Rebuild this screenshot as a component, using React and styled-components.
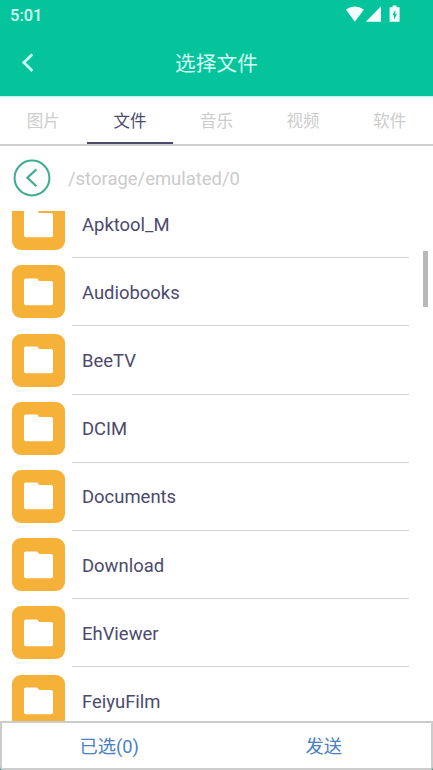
import React from "react";
import styled, { createGlobalStyle } from "styled-components";

const tabs = ["图片", "文件", "音乐", "视频", "软件"];

const folders = [
  "Apktool_M",
  "Audiobooks",
  "BeeTV",
  "DCIM",
  "Documents",
  "Download",
  "EhViewer",
  "FeiyuFilm"
];

const App = () => (
  <Screen>
    <GlobalStyle />
    <StatusBar>
      <Clock>5:01</Clock>
      <svg width="57" height="18" viewBox="0 0 57 18" fill="#f2fffc">
        <path d="M0.8 5.6Q9.8 -0.8 19 5.6L9.8 17.8Z" />
        <path d="M20.8 17.8L36 2.2V17.8Z" />
        <path d="M47.6 1.6h4v1.6h3V17.8h-10V3.2h3Z" />
        <path d="M50.4 6L47.4 11.2h1.6v4.2l2.9-5.2h-1.5Z" fill="#05c39a" />
      </svg>
    </StatusBar>
    <Header>
      <BackButton aria-label="back">
        <svg width="14" height="20" viewBox="0 0 14 20" fill="none">
          <path d="M11.4 1.2L2.8 9.6L11.4 18" stroke="#c9fff2" strokeWidth="2.8" />
        </svg>
      </BackButton>
      <Title>选择文件</Title>
    </Header>
    <TabBar>
      {tabs.map(tab => (
        <Tab key={tab} $active={tab === "文件"}>
          {tab}
        </Tab>
      ))}
    </TabBar>
    <PathBar>
      <svg width="38" height="38" viewBox="0 0 38 38" fill="none" stroke="#3dac8f">
        <circle cx="19" cy="19" r="17.4" strokeWidth="2" />
        <path d="M23.4 10.4L14.4 18.8L23.4 27.2" strokeWidth="2.2" />
      </svg>
      <Path>/storage/emulated/0</Path>
    </PathBar>
    <ListArea>
      <FolderList>
        {folders.map(name => (
          <FolderRow key={name}>
            <FolderIcon>
              <svg width="29" height="28" viewBox="0 0 29 28" fill="#fff">
                <path d="M1.8 0.5H12.6Q13.6 0.5 14.1 1.4L15 3H27.2Q29 3 29 4.8V25.4Q29 27.2 27.2 27.2H1.8Q0 27.2 0 25.4V2.3Q0 0.5 1.8 0.5Z" />
              </svg>
            </FolderIcon>
            <FolderName>{name}</FolderName>
          </FolderRow>
        ))}
      </FolderList>
      <ScrollTrack>
        <ScrollThumb />
      </ScrollTrack>
    </ListArea>
    <Footer>
      <FooterBar>
        <FooterButton>已选(0)</FooterButton>
        <FooterButton>发送</FooterButton>
      </FooterBar>
    </Footer>
  </Screen>
);

const GlobalStyle = createGlobalStyle`
  * {
    box-sizing: border-box;
  }
  body {
    margin: 0;
    background: #fff;
    font-family: Roboto, "Noto Sans CJK SC", sans-serif;
  }
  svg {
    display: block;
    flex: none;
  }
`;

const Screen = styled.div`
  display: flex;
  flex-direction: column;
  width: 433px;
  height: 770px;
  overflow: hidden;
  background: #fff;
`;

const StatusBar = styled.div`
  display: flex;
  justify-content: space-between;
  height: 30px;
  flex: none;
  padding: 4px 31px 0 10px;
  background: #05c39a;
`;

const Clock = styled.span`
  color: #d3fff4;
  font-size: 16.5px;
  font-weight: 500;
  line-height: 23px;
`;

const Header = styled.header`
  display: grid;
  grid-template-columns: 56px 1fr 56px;
  align-items: center;
  height: 66px;
  flex: none;
  background: #05c39a;
`;

const BackButton = styled.button`
  display: flex;
  padding: 0 0 0 21px;
  border: 0;
  background: none;
`;

const Title = styled.h1`
  margin: 0;
  padding-top: 2px;
  color: #d3fff4;
  font-size: 20.7px;
  font-weight: 400;
  line-height: 32px;
  text-align: center;
`;

const TabBar = styled.nav`
  display: flex;
  height: 50px;
  flex: none;
  border-top: 1px solid #b5ffee;
  border-bottom: 2px solid #cfcfcf;
`;

const Tab = styled.button`
  flex: 1;
  padding: 1px 0 0;
  border: 0;
  border-bottom: 2px solid ${props => (props.$active ? "#4c4a6c" : "transparent")};
  background: none;
  color: ${props => (props.$active ? "#4c4a6c" : "#cccccc")};
  font-family: inherit;
  font-size: 16.5px;
`;

const PathBar = styled.div`
  display: flex;
  align-items: center;
  gap: 17px;
  height: 65px;
  flex: none;
  padding: 0 0 1px 13px;
`;

const Path = styled.span`
  padding-top: 2px;
  color: #cbcbcb;
  font-size: 18.45px;
`;

const ListArea = styled.div`
  display: flex;
  height: 510px;
  flex: none;
  overflow: hidden;
`;

const FolderList = styled.ul`
  flex: 1;
  margin: -20.9px 0 0;
  padding: 0 0 0 12px;
  list-style: none;
`;

const FolderRow = styled.li`
  display: flex;
  align-items: center;
  gap: 7px;
  height: 68.2px;
`;

const FolderIcon = styled.span`
  display: flex;
  align-items: center;
  justify-content: center;
  width: 53px;
  height: 53px;
  margin-bottom: 1px;
  border-radius: 9px;
  background: #f5b138;
`;

const FolderName = styled.span`
  display: flex;
  flex: 1;
  align-items: center;
  height: 100%;
  padding: 2px 0 0 10px;
  border-bottom: 1px solid #d2d2d2;
  color: #4c4a6c;
  font-size: 18.45px;
`;

const ScrollTrack = styled.div`
  width: 24px;
  padding: 40px 5px 0 14px;
`;

const ScrollThumb = styled.div`
  height: 56px;
  background: #b8b8b8;
`;

const Footer = styled.footer`
  height: 49px;
  flex: none;
  background: linear-gradient(#fff 50%, #3f8d86 50%);
`;

const FooterBar = styled.div`
  display: flex;
  height: 49px;
  border: 2px solid #cccccc;
  border-radius: 0 0 3px 3px;
  background: #fff;
`;

const FooterButton = styled.button`
  flex: 1;
  padding: 0 0 2px;
  border: 0;
  background: none;
  color: #4a80c4;
  font-family: inherit;
  font-size: 18.3px;
`;

export default App;
